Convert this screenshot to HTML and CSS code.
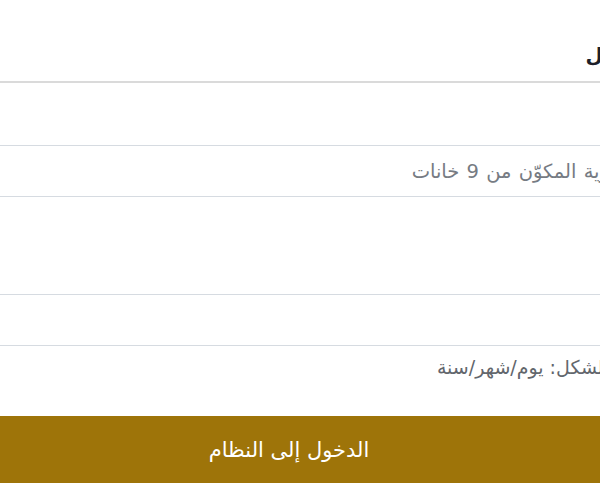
FILE: index.html
```html
<!DOCTYPE html>
<html lang="ar" dir="rtl">
<head>
    <meta charset="UTF-8">
    <meta name="viewport" content="width=device-width, initial-scale=1.0">
    <title>الدخول إلى النظام</title>
    <link rel="stylesheet" href="styles.css">
</head>
<body>
    <form class="login-form" onsubmit="return false">
        <h2 class="form-title">تسجيل الدخول</h2>

        <div class="field">
            <label class="field-label" for="idNumber">رقم الهوية</label>
            <input class="field-input field-id" type="text" id="idNumber" placeholder="أدخل رقم الهوية المكوّن من 9 خانات">
        </div>

        <div class="field field-date">
            <label class="field-label" for="birthDate">تاريخ الميلاد</label>
            <input class="field-input" type="text" id="birthDate">
            <small class="field-hint">أدخل التاريخ بالشكل: يوم/شهر/سنة</small>
        </div>

        <button class="submit-btn" type="submit">الدخول إلى النظام</button>
    </form>
</body>
</html>
```

FILE: styles.css
```css
html, body {
    overflow-x: hidden;
}

body {
    margin: 0;
    background-color: #fff;
    font-family: "DejaVu Sans", sans-serif;
    color: #222;
}

.login-form {
    width: 902px;
    margin-right: -140px;
    direction: rtl;
}

.form-title {
    margin: 0;
    padding: 40px 9px 11px 0;
    font-size: 20px;
    line-height: 30px;
    font-weight: bold;
    color: #1c1f2a;
    border-bottom: 2px solid #dadada;
}

.field-label {
    display: block;
    padding-right: 40px;
    font-size: 17px;
    color: #333;
}

.field:first-of-type .field-label {
    margin: 22px 0 16px;
    line-height: 24px;
}

.field-date .field-label {
    margin: 40px 0 33px;
    line-height: 24px;
}

.field-input {
    display: block;
    box-sizing: border-box;
    width: 100%;
    height: 52px;
    padding: 0 40px;
    border: 1px solid #d6dbe1;
    font-family: inherit;
    font-size: 18px;
    color: #333;
    background: #fff;
}

.field-id {
    padding-right: 22px;
    font-size: 19.5px;
    word-spacing: 1px;
}

.field-input::placeholder {
    color: #767b83;
}

.field-hint {
    display: block;
    margin-top: 11px;
    padding-right: 24px;
    font-size: 19px;
    line-height: 20px;
    color: #62666c;
}

.submit-btn {
    display: block;
    width: 100%;
    height: 67px;
    margin-top: 39px;
    border: none;
    background-color: #9e7409;
    color: #fff;
    font-family: inherit;
    font-size: 21px;
    cursor: pointer;
}
```
